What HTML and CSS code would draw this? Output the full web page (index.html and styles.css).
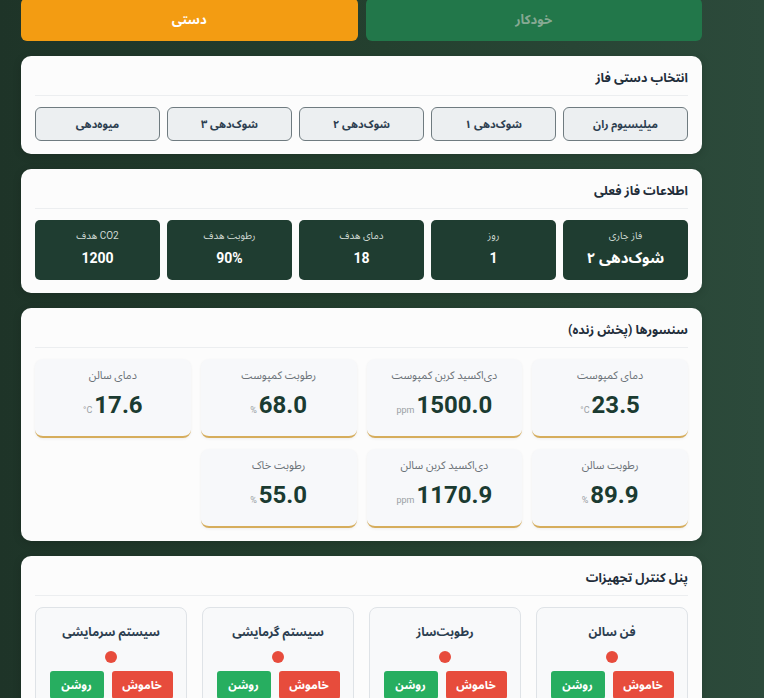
FILE: index.html
```html
<!DOCTYPE html>
<html lang="fa" dir="rtl">
<head>
    <meta charset="UTF-8">
    <meta name="viewport" content="width=device-width, initial-scale=1.0">
    <title>کنترل سالن</title>
    <link rel="stylesheet" href="styles.css">
</head>
<body>
    <div class="wrap">
        <div class="mode-toggle">
            <button class="mode-btn auto">خودکار</button>
            <button class="mode-btn manual">دستی</button>
        </div>

        <div class="card">
            <h3 class="card-title">انتخاب دستی فاز</h3>
            <div class="phase-grid">
                <button class="phase-btn">میلیسیوم ران</button>
                <button class="phase-btn">شوک‌دهی ۱</button>
                <button class="phase-btn">شوک‌دهی ۲</button>
                <button class="phase-btn">شوک‌دهی ۳</button>
                <button class="phase-btn">میوه‌دهی</button>
            </div>
        </div>

        <div class="card">
            <h3 class="card-title">اطلاعات فاز فعلی</h3>
            <div class="phase-grid">
                <div class="info-box">
                    <div class="info-label">فاز جاری</div>
                    <div class="info-value big">شوک‌دهی ۲</div>
                </div>
                <div class="info-box">
                    <div class="info-label">روز</div>
                    <div class="info-value">1</div>
                </div>
                <div class="info-box">
                    <div class="info-label">دمای هدف</div>
                    <div class="info-value">18</div>
                </div>
                <div class="info-box">
                    <div class="info-label">رطوبت هدف</div>
                    <div class="info-value">90%</div>
                </div>
                <div class="info-box">
                    <div class="info-label">CO2 هدف</div>
                    <div class="info-value">1200</div>
                </div>
            </div>
        </div>

        <div class="card">
            <h3 class="card-title">سنسورها (پخش زنده)</h3>
            <div class="sensor-grid">
                <div class="sensor">
                    <div class="sensor-label">دمای کمپوست</div>
                    <div class="sensor-value"><span class="unit">°C</span>23.5</div>
                </div>
                <div class="sensor">
                    <div class="sensor-label">دی‌اکسید کربن کمپوست</div>
                    <div class="sensor-value"><span class="unit">ppm</span>1500.0</div>
                </div>
                <div class="sensor">
                    <div class="sensor-label">رطوبت کمپوست</div>
                    <div class="sensor-value"><span class="unit">%</span>68.0</div>
                </div>
                <div class="sensor">
                    <div class="sensor-label">دمای سالن</div>
                    <div class="sensor-value"><span class="unit">°C</span>17.6</div>
                </div>
                <div class="sensor">
                    <div class="sensor-label">رطوبت سالن</div>
                    <div class="sensor-value"><span class="unit">%</span>89.9</div>
                </div>
                <div class="sensor">
                    <div class="sensor-label">دی‌اکسید کربن سالن</div>
                    <div class="sensor-value"><span class="unit">ppm</span>1170.9</div>
                </div>
                <div class="sensor">
                    <div class="sensor-label">رطوبت خاک</div>
                    <div class="sensor-value"><span class="unit">%</span>55.0</div>
                </div>
            </div>
        </div>

        <div class="card">
            <h3 class="card-title">پنل کنترل تجهیزات</h3>
            <div class="device-grid">
                <div class="device">
                    <div class="device-name">فن سالن</div>
                    <span class="dot"></span>
                    <div class="device-btns">
                        <button class="btn-off">خاموش</button>
                        <button class="btn-on">روشن</button>
                    </div>
                </div>
                <div class="device">
                    <div class="device-name">رطوبت‌ساز</div>
                    <span class="dot"></span>
                    <div class="device-btns">
                        <button class="btn-off">خاموش</button>
                        <button class="btn-on">روشن</button>
                    </div>
                </div>
                <div class="device">
                    <div class="device-name">سیستم گرمایشی</div>
                    <span class="dot"></span>
                    <div class="device-btns">
                        <button class="btn-off">خاموش</button>
                        <button class="btn-on">روشن</button>
                    </div>
                </div>
                <div class="device">
                    <div class="device-name">سیستم سرمایشی</div>
                    <span class="dot"></span>
                    <div class="device-btns">
                        <button class="btn-off">خاموش</button>
                        <button class="btn-on">روشن</button>
                    </div>
                </div>
            </div>
        </div>
    </div>
</body>
</html>
```

FILE: styles.css
```css
html, body {
    margin: 0;
    height: 100%;
}
body {
    font-family: Roboto, "Noto Sans Arabic", "DejaVu Sans", sans-serif;
    background: linear-gradient(90deg, #1e3428 0%, #24402f 50%, #2c4a3b 100%);
    color: #2c3e50;
    overflow: hidden;
}
.wrap {
    width: 681px;
    margin-left: 21px;
    margin-right: 62px;
}
button {
    font-family: inherit;
    cursor: pointer;
}

/* حالت */
.mode-toggle {
    display: grid;
    grid-template-columns: 1fr 1fr;
    gap: 8px;
    margin-top: -2px;
    margin-bottom: 15px;
}
.mode-btn {
    height: 43px;
    border: none;
    border-radius: 6px;
    font-size: 13px;
    font-weight: bold;
}
.mode-btn.auto {
    background-color: #22774a;
    color: #86a993;
}
.mode-btn.manual {
    background-color: #f39c12;
    color: #fff;
}

/* کارت */
.card {
    background-color: #fcfcfc;
    border-radius: 10px;
    padding: 12px 14px 13px;
    margin-bottom: 15px;
    box-shadow: 0 2px 8px rgba(0, 0, 0, 0.15);
}
.card-title {
    margin: 0 0 11px;
    padding-bottom: 7px;
    border-bottom: 1px solid #eceef0;
    font-size: 12.5px;
    line-height: 20px;
    font-weight: bold;
    color: #1f2d3a;
}

.phase-grid {
    display: grid;
    grid-template-columns: repeat(5, 1fr);
    gap: 7px;
}
.phase-btn {
    height: 34px;
    background-color: #eceff1;
    border: 1px solid #6f7b80;
    border-radius: 6px;
    font-size: 11px;
    font-weight: bold;
    color: #2c3e50;
}

.info-box {
    height: 60px;
    background-color: #1f3d31;
    border-radius: 5px;
    color: #fff;
    text-align: center;
    box-sizing: border-box;
    padding-top: 9px;
}
.info-label {
    font-size: 10px;
    line-height: 14px;
    color: #cfd9d3;
}
.info-value {
    font-size: 14px;
    line-height: 18px;
    font-weight: bold;
    margin-top: 6px;
}
.info-value.big {
    font-size: 15px;
}

/* سنسورها */
.sensor-grid {
    display: grid;
    grid-template-columns: repeat(4, 1fr);
    gap: 11px 10px;
}
.sensor {
    height: 79px;
    box-sizing: border-box;
    background-color: #f7f8fa;
    border-radius: 8px;
    border-bottom: 2px solid #d6ad5c;
    box-shadow: 0 1px 3px rgba(0, 0, 0, 0.06);
    text-align: center;
    padding-top: 10px;
}
.sensor-label {
    font-size: 11px;
    line-height: 14px;
    color: #6b7278;
}
.sensor-value {
    margin-top: 7px;
    font-size: 24px;
    line-height: 30px;
    font-weight: bold;
    color: #1b3b31;
    direction: ltr;
}
.unit {
    font-size: 9px;
    font-weight: normal;
    color: #9aa0a4;
    margin-right: 2px;
}

/* تجهیزات */
.device-grid {
    display: grid;
    grid-template-columns: repeat(4, 1fr);
    gap: 15px;
}
.device {
    height: 110px;
    box-sizing: border-box;
    background-color: #f8f9fa;
    border: 1px solid #dfe3e7;
    border-radius: 8px;
    padding-top: 13px;
    text-align: center;
}
.device-name {
    font-size: 12px;
    line-height: 22px;
    font-weight: bold;
    color: #2c3e50;
}
.dot {
    display: block;
    width: 12px;
    height: 12px;
    border-radius: 50%;
    background-color: #e74c3c;
    margin: 8px auto 8px;
}
.device-btns {
    display: flex;
    justify-content: center;
    gap: 8px;
}
.device-btns button {
    height: 28px;
    border: none;
    border-radius: 3px;
    color: #fff;
    font-size: 11.5px;
    font-weight: bold;
}
.btn-off {
    width: 61px;
    background-color: #e74c3c;
}
.btn-on {
    width: 54px;
    background-color: #27ae60;
}
```
